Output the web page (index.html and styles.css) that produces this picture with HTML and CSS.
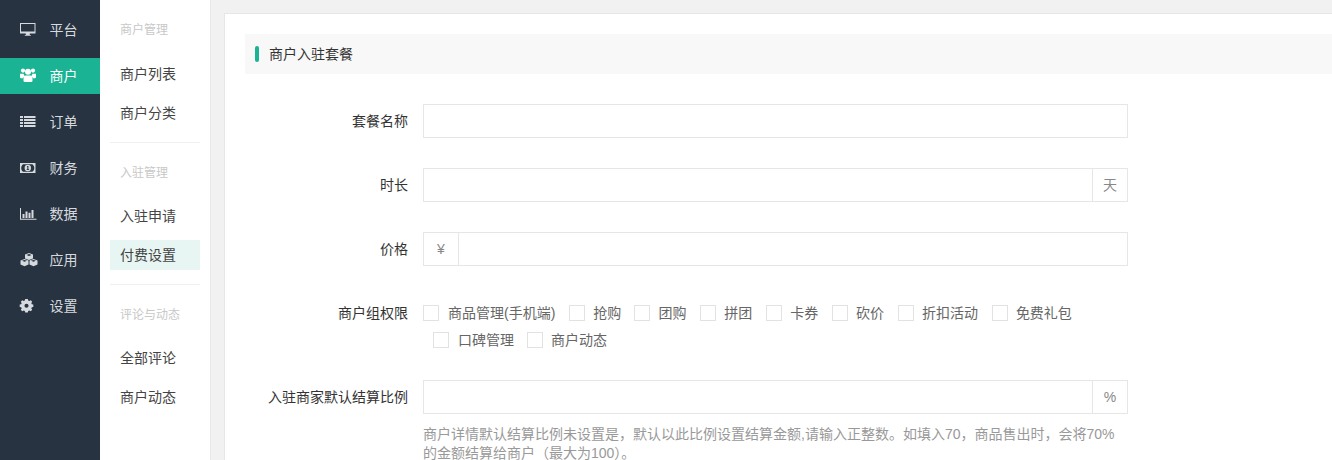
FILE: index.html
```html
<!DOCTYPE html>
<html lang="zh-CN">
<head>
<meta charset="utf-8">
<title>商户入驻套餐</title>
<link rel="stylesheet" href="styles.css">
</head>
<body>
<div class="app">
  <nav class="nav">
    <a class="nav-item"><svg class="ico" viewBox="0 0 16 14"><path fill-rule="evenodd" d="M0 1h15.500v10.500H0zM1 2v7.500h13.500V2zM5.800 11.500h4v1.500h1v.7h-6V13h1z"/></svg><span>平台</span></a>
    <a class="nav-item active"><svg class="ico" viewBox="0 0 16 14"><circle cx="3" cy="2.600" r="2.100"/><circle cx="13" cy="2.600" r="2.100"/><circle cx="8" cy="3.800" r="3"/><path d="M0 5.800h3.600a4 4 0 0 0 1.200 2.300A4 4 0 0 0 3 10.300H1.200Q0 10.300 0 9.100zM16 5.800h-3.600a4 4 0 0 1-1.200 2.300 4 4 0 0 1 1.800 2.200h1.800q1.200 0 1.200-1.200zM5.500 7.400h5q2 .5 2 3.400v1.900q0 1.200-1.200 1.200H4.700q-1.200 0-1.200-1.200v-1.900q0-2.900 2-3.400z"/></svg><span>商户</span></a>
    <a class="nav-item"><svg class="ico" viewBox="0 0 16 14"><path d="M0 2h3v2H0zM4 2h11.500v2H4zM0 5h3v2H0zM4 5h11.500v2H4zM0 8h3v2H0zM4 8h11.500v2H4zM0 11h3v2H0zM4 11h11.500v2H4z"/></svg><span>订单</span></a>
    <a class="nav-item"><svg class="ico" viewBox="0 0 16 14"><path fill-rule="evenodd" d="M0 3h15.500v10H0zM1.200 8c0 1.600 1 3.500 2 3.800h9c1-.3 2.100-2.200 2.100-3.800s-1.100-3.500-2.100-3.800h-9c-1 .3-2 2.200-2 3.800z"/><path fill-rule="evenodd" d="M7.800 4.800a3.200 3.200 0 1 1 0 6.400 3.200 3.200 0 0 1 0-6.400zM7.300 6H8.400v3.200h.7V10H6.600v-.8h.7V7H6.800z"/></svg><span>财务</span></a>
    <a class="nav-item"><svg class="ico" viewBox="0 0 16 14"><path d="M0 2h1v10.700h15.500v1H0zM2.500 8h2v4h-2zM5.500 5.500h2V12h-2zM8.500 6.800h2V12h-2zM11.500 4h2v8h-2z"/></svg><span>数据</span></a>
    <a class="nav-item"><svg class="ico wide" viewBox="0 0 18 14"><path fill-rule="evenodd" d="M9 1l4 1.500v4L9 8 5 6.500v-4zM6.500 2.900L9 3.900l2.500-1L9 2z"/><path fill-rule="evenodd" d="M4.500 7l4 1.500v4l-4 1.800L.5 12.500v-4zM2 8.800l2.500 1 2.500-1-2.500-.9z"/><path fill-rule="evenodd" d="M13.500 7l4 1.500v4l-4 1.800-4-1.800v-4zM11 8.800l2.500 1 2.500-1-2.500-.9z"/></svg><span>应用</span></a>
    <a class="nav-item"><svg class="ico" viewBox="0 0 16 14"><path fill-rule="evenodd" d="M5.200 1h2.600l.4 1.500 1.200.5 1.400-.8 1.400 1.500-.9 1.300.5 1.200 1.500.4v2.300l-1.500.4-.5 1.200.9 1.300-1.400 1.500-1.400-.8-1.200.5-.4 1.500H5.200l-.4-1.500-1.200-.5-1.400.8L.8 11.800l.9-1.300-.5-1.200L-.300 8.900V6.600l1.500-.4.5-1.200-.9-1.300L2.200 2.200l1.400.8 1.200-.5zM6.500 5.700a2 2 0 1 0 0 4.100 2 2 0 0 0 0-4.100z"/></svg><span>设置</span></a>
  </nav>
  <aside class="sub">
    <section class="sub-group">
      <h4 class="sub-title">商户管理</h4>
      <a class="sub-item">商户列表</a>
      <a class="sub-item">商户分类</a>
    </section>
    <section class="sub-group">
      <h4 class="sub-title">入驻管理</h4>
      <a class="sub-item">入驻申请</a>
      <a class="sub-item current">付费设置</a>
    </section>
    <section class="sub-group">
      <h4 class="sub-title">评论与动态</h4>
      <a class="sub-item">全部评论</a>
      <a class="sub-item">商户动态</a>
    </section>
  </aside>
  <main class="main">
    <div class="card">
      <div class="section-head"><i class="section-bar"></i><span class="section-text">商户入驻套餐</span></div>
      <div class="row">
        <label class="label">套餐名称</label>
        <div class="field"><div class="input-group"><span class="input"></span></div></div>
      </div>
      <div class="row">
        <label class="label">时长</label>
        <div class="field"><div class="input-group"><span class="input"></span><span class="addon">天</span></div></div>
      </div>
      <div class="row">
        <label class="label">价格</label>
        <div class="field"><div class="input-group"><span class="addon left">¥</span><span class="input"></span></div></div>
      </div>
      <div class="row row-checks">
        <label class="label">商户组权限</label>
        <div class="field checks">
          <label class="check first"><i class="box"></i>商品管理(手机端)</label>
          <label class="check second"><i class="box"></i>抢购</label>
          <label class="check"><i class="box"></i>团购</label>
          <label class="check"><i class="box"></i>拼团</label>
          <label class="check"><i class="box"></i>卡券</label>
          <label class="check"><i class="box"></i>砍价</label>
          <label class="check"><i class="box"></i>折扣活动</label>
          <label class="check"><i class="box"></i>免费礼包</label>
          <label class="check line-start"><i class="box"></i>口碑管理</label>
          <label class="check after-line"><i class="box"></i>商户动态</label>
        </div>
      </div>
      <div class="row">
        <label class="label">入驻商家默认结算比例</label>
        <div class="field">
          <div class="input-group"><span class="input"></span><span class="addon">%</span></div>
          <p class="help">商户详情默认结算比例未设置是，默认以此比例设置结算金额,请输入正整数。如填入70，商品售出时，会将70%的金额结算给商户（最大为100）。</p>
        </div>
      </div>
    </div>
  </main>
</div>
</body>
</html>
```
FILE: styles.css
```css
* { box-sizing: border-box; }
html, body { margin: 0; height: 100%; overflow: hidden; }
body {
  font-family: "Liberation Sans", "Noto Sans CJK SC", sans-serif;
  font-size: 14px;
  color: #333;
  background: #f1f1f1;
}
.app { display: flex; height: 460px; overflow: hidden; }

.nav { width: 100px; flex: none; background: #283341; padding-top: 12px; }
.nav-item {
  display: flex;
  align-items: center;
  height: 36px;
  margin-bottom: 10px;
  padding: 0 0 2px 20px;
  color: #d6dade;
}
.nav-item.active { background: #1ab394; color: #fff; }
.ico { width: 16px; height: 14px; margin-right: 13.5px; fill: currentColor; flex: none; overflow: visible; }
.ico.wide { width: 18px; margin-right: 11.5px; }

.sub {
  width: 111px;
  flex: none;
  background: #fff;
  border-right: 1px solid #e8e8e8;
  padding: 0 10px;
}
.sub-group { padding-top: 21px; height: 142px; border-bottom: 1px solid #f0f0f0; }
.sub-group:first-child { height: 143px; }
.sub-group:last-child { border-bottom: 0; }
.sub-title { margin: 0 0 19px 10px; font-size: 12px; line-height: 18px; font-weight: 400; color: #c8c8c8; }
.sub-group:first-child .sub-title { margin-bottom: 20px; }
.sub-item { display: block; height: 30px; line-height: 30px; padding-left: 10px; margin-bottom: 9px; color: #444; }
.sub-item.current { background: #e8f6f3; }

.main { flex: 1; min-width: 0; padding: 13px 0 0 13px; overflow: hidden; }
.card {
  width: 1300px;
  min-height: 600px;
  background: #fff;
  border: 1px solid #e6e6e6;
  padding: 20px 0 0 20px;
}
.section-head {
  display: flex;
  align-items: center;
  height: 40px;
  padding-left: 10px;
  margin-bottom: 30px;
  background: #f8f8f8;
  color: #333;
}
.section-bar { width: 4px; height: 16px; margin-right: 10px; border-radius: 2px; background: #1ab394; }
.section-text { padding-bottom: 2px; }

.row { display: flex; margin-bottom: 30px; }
.label { width: 163px; flex: none; text-align: right; line-height: 34px; color: #333; margin-right: 15px; }
.field { width: 705px; flex: none; }
.input-group { display: flex; height: 34px; border: 1px solid #e6e6e6; background: #fff; }
.input { flex: 1; }
.addon { width: 35px; flex: none; border-left: 1px solid #e6e6e6; text-align: center; line-height: 32px; color: #888; }
.addon.left { border-left: 0; border-right: 1px solid #e6e6e6; }

.row-checks { margin-bottom: 26px; }
.checks { line-height: 27px; margin-top: 4px; }
.row-checks .label { line-height: 27px; margin-top: 4px; }
.check { display: inline-block; margin-left: 10px; color: #666; line-height: 27px; }
.box {
  display: inline-block;
  width: 16px;
  height: 16px;
  margin-right: 8px;
  vertical-align: -3px;
  border: 1px solid #e2e2e2;
  background: #fff;
}
.check.first { margin-left: 0; }
.check.first .box, .check.line-start .box { margin-right: 9px; }
.check.second { margin-right: -0.7px; }
.check.after-line { margin-left: 9px; }
.help { margin: 11px 0 0; line-height: 19px; color: #999; }
```
